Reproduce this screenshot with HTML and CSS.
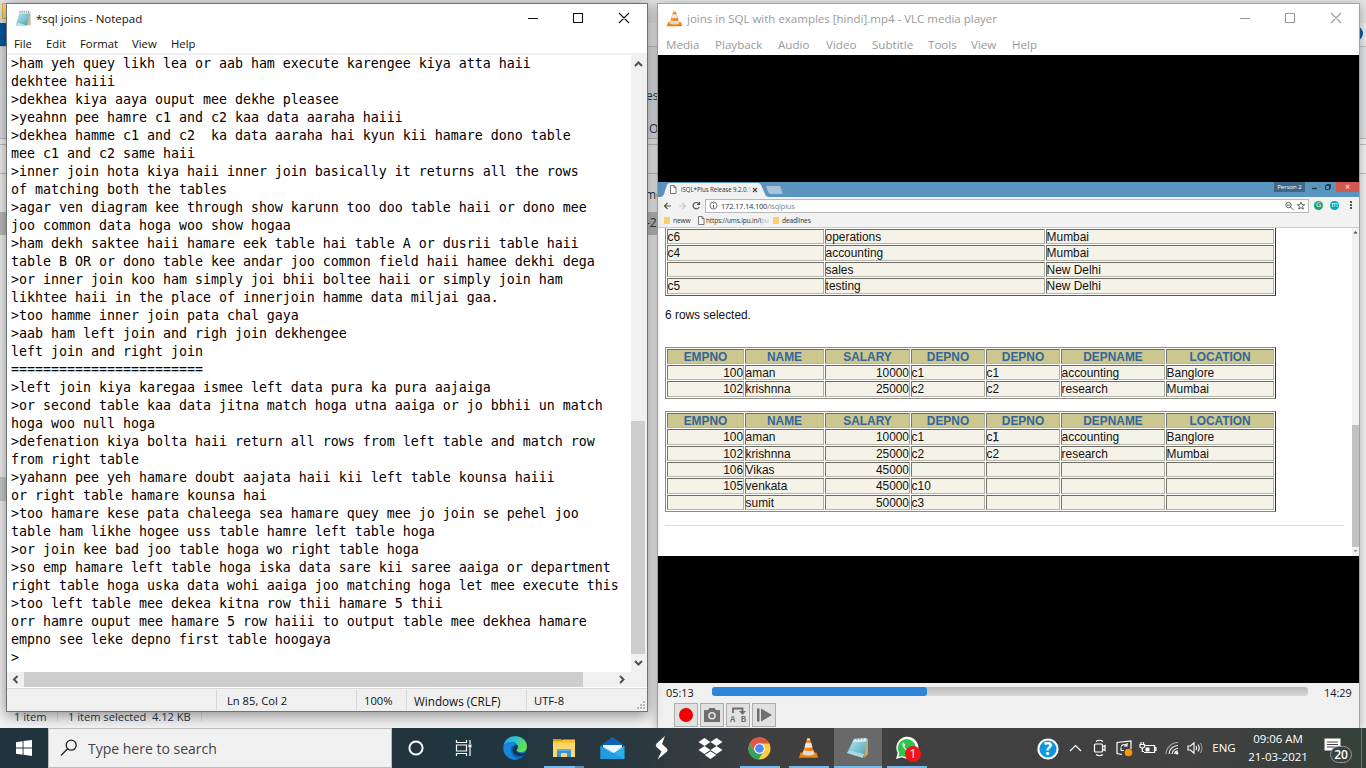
FILE: index.html
```html
<!DOCTYPE html>
<html lang="en">
<head>
<meta charset="utf-8">
<title>Desktop</title>
<link rel="stylesheet" href="styles.css">
</head>
<body>
<svg width="0" height="0" class="defs">
  <defs>
    <linearGradient id="pad" x1="0" y1="0" x2="1" y2="1"><stop offset="0" stop-color="#c3eef4"/><stop offset="1" stop-color="#3f9db5"/></linearGradient>
    <linearGradient id="edgeA" x1="0" y1="0" x2="1" y2="0.4"><stop offset="0" stop-color="#2aa8e8"/><stop offset=".5" stop-color="#2fc4c8"/><stop offset="1" stop-color="#62e04f"/></linearGradient>
    <linearGradient id="cone" x1="0" y1="0" x2="1" y2="0"><stop offset="0" stop-color="#ffa02a"/><stop offset="1" stop-color="#e86a00"/></linearGradient>
    <symbol id="i-pad" viewBox="0 0 24 24">
      <path d="M20 3h2v18l-5 1z" fill="#c9b98a"/><path d="M7 2h14l-4 20H1z" fill="url(#pad)"/><path d="M7 2h14l-.6 3H6z" fill="#e9f4f5"/><path d="M7 1v3M10 1v3M13 1v3M16 1v3M19 1v3" stroke="#6d7f84" stroke-width="1"/><path d="M5.500 9h13M4.500 12h13M4 15h13" stroke="#9ad5e0" stroke-width=".6"/><path d="M1 22l3-4 13 4z" fill="#b8e2ea"/>
    </symbol>
    <symbol id="i-bigpad" viewBox="0 0 24 24">
      <path d="M19 2l3 1v15l-4 4z" fill="#b9a878"/><path d="M8 3l13-1-4 20-16-5z" fill="url(#pad)"/><path d="M8 3l13-1-.8 3.500L6.500 6z" fill="#e4eff1"/><path d="M8 2v2.500M11 1.800v2.500M14 1.500V4M17 1.200v2.500M20 1v2.500" stroke="#7c8b90" stroke-width=".9"/><path d="M1 17l2.500-2.500L18 18l-1 4z" fill="#a9d6e0"/>
    </symbol>
    <symbol id="i-cone" viewBox="0 0 24 24">
      <path d="M3 17h18l2 6H1z" fill="#f58300"/><path d="M10.500 1h3L19 19q-7 3-14 0z" fill="url(#cone)"/><path d="M9 6h6l1.500 5q-4.500 1.500-9 0z" fill="#e9e9e9"/><path d="M6.400 14.500q5.600 2 11.200 0L19 19q-7 3-14 0z" fill="#dcdcdc"/><path d="M10.500 1h3l.5 2h-4z" fill="#e9e9e9"/>
    </symbol>
    <symbol id="i-page" viewBox="0 0 8 9"><path d="M1.500.5h3.500l2 2v6h-5.500zM5 .5v2h2" fill="#fff" stroke="#555" stroke-width=".8"/></symbol>
  </defs>
</svg>

<main class="desktop">
  <section class="explorer">
    <div class="ex-title"><span class="ex-folder"></span></div>
    <div class="ex-tabs"><span class="ex-file"></span><span class="ex-help"></span></div>
    <div class="ex-ribbon"><span class="ex-es">es</span><span class="ex-o">O</span></div>
    <div class="ex-address"></div>
    <div class="ex-body"><span class="ex-mo">mo</span><div class="ex-sel">-2</div><div class="ex-nav"></div></div>
    <div class="ex-status"><span class="ex-count">1 item</span><span class="ex-picked">1 item selected&nbsp; 4.12 KB</span></div>
  </section>

  <section class="window notepad">
    <header class="titlebar">
      <svg class="app-icon" width="17" height="17"><use href="#i-pad"/></svg>
      <h1 class="np-name">*sql joins - Notepad</h1>
      <svg class="controls" width="110" height="14" viewBox="0 0 110 14" fill="none" stroke="currentColor"><path d="M1 7.500h10M46.500 2.500h9v9h-9zM92 2l10 10M102 2L92 12" stroke-width="1.100"/></svg>
    </header>
    <nav class="np-menu"><span>File</span><span>Edit</span><span>Format</span><span>View</span><span>Help</span></nav>
    <div class="np-edit">
<pre class="np-text">&gt;ham yeh quey likh lea or aab ham execute karengee kiya atta haii
dekhtee haiii
&gt;dekhea kiya aaya ouput mee dekhe pleasee
&gt;yeahnn pee hamre c1 and c2 kaa data aaraha haiii
&gt;dekhea hamme c1 and c2  ka data aaraha hai kyun kii hamare dono table
mee c1 and c2 same haii
&gt;inner join hota kiya haii inner join basically it returns all the rows
of matching both the tables
&gt;agar ven diagram kee through show karunn too doo table haii or dono mee
joo common data hoga woo show hogaa
&gt;ham dekh saktee haii hamare eek table hai table A or dusrii table haii
table B OR or dono table kee andar joo common field haii hamee dekhi dega
&gt;or inner join koo ham simply joi bhii boltee haii or simply join ham
likhtee haii in the place of innerjoin hamme data miljai gaa.
&gt;too hamme inner join pata chal gaya
&gt;aab ham left join and righ join dekhengee
left join and right join
========================
&gt;left join kiya karegaa ismee left data pura ka pura aajaiga
&gt;or second table kaa data jitna match hoga utna aaiga or jo bbhii un match
hoga woo null hoga
&gt;defenation kiya bolta haii return all rows from left table and match row
from right table
&gt;yahann pee yeh hamare doubt aajata haii kii left table kounsa haiii
or right table hamare kounsa hai
&gt;too hamare kese pata chaleega sea hamare quey mee jo join se pehel joo
table ham likhe hogee uss table hamre left table hoga
&gt;or join kee bad joo table hoga wo right table hoga
&gt;so emp hamare left table hoga iska data sare kii saree aaiga or department
right table hoga uska data wohi aaiga joo matching hoga let mee execute this
&gt;too left table mee dekea kitna row thii hamare 5 thii
orr hamre ouput mee hamare 5 row haiii to output table mee dekhea hamare
empno see leke depno first table hoogaya
&gt;</pre>
      <div class="vscroll">
        <svg width="16" height="17" fill="none" stroke="#505050" stroke-width="2"><path d="M4 11l3.500-3.500L11 11"/></svg>
        <div class="vthumb"></div>
        <svg width="16" height="17" fill="none" stroke="#505050" stroke-width="2"><path d="M4 7l3.500 3.500L11 7"/></svg>
      </div>
    </div>
    <div class="hscroll">
      <svg width="17" height="15" fill="none" stroke="#505050" stroke-width="2"><path d="M10.500 4L7 7.500l3.500 3.500"/></svg>
      <div class="hthumb"></div>
      <svg class="hright" width="17" height="15" fill="none" stroke="#505050" stroke-width="2"><path d="M6 4l3.500 3.500L6 11"/></svg>
    </div>
    <footer class="np-status">
      <span class="st-pos">Ln 85, Col 2</span><span class="st-zoom">100%</span><span class="st-eol">Windows (CRLF)</span><span class="st-enc">UTF-8</span>
      <svg class="grip" width="9" height="9" fill="#b8b8b8"><path d="M6 0h2v2H6zM3 3h2v2H3zM6 3h2v2H6zM0 6h2v2H0zM3 6h2v2H3zM6 6h2v2H6z"/></svg>
    </footer>
  </section>

  <section class="window vlc">
    <header class="titlebar">
      <svg class="app-icon" width="17" height="17"><use href="#i-cone"/></svg>
      <h1 class="vlc-name">joins in SQL with examples [hindi].mp4 - VLC media player</h1>
      <svg class="controls" width="110" height="14" viewBox="0 0 110 14" fill="none" stroke="currentColor"><path d="M1 7.500h10M46.500 2.500h9v9h-9zM92 2l10 10M102 2L92 12" stroke-width="1.100"/></svg>
    </header>
    <nav class="vlc-menu"><span>Media</span><span>Playback</span><span>Audio</span><span>Video</span><span>Subtitle</span><span>Tools</span><span>View</span><span>Help</span></nav>
    <div class="video">
      <div class="browser">
        <div class="tabstrip">
          <svg class="tabshape" width="125" height="15"><path d="M2 15q3 0 4-3L9 3q1-2 3-2h88q2 0 3 2l4 9q1 3 4 3z" fill="#f2f2f2"/><path d="M108 4h13q1 0 1.500 1l2 6q0 1-1 1h-11q-1.500 0-2-1z" fill="#a9c3d8"/></svg>
          <div class="tabtext"><svg width="8" height="9"><use href="#i-page"/></svg><span>iSQL*Plus Release 9.2.0.<i>1</i></span><svg class="tabx" width="6" height="6" stroke="#444" stroke-width="1.100"><path d="M1 1l4 4M5 1L1 5"/></svg></div>
          <div class="wincontrols"><span class="person">Person 2</span><svg width="36" height="10" fill="none" stroke="#1d3950"><path d="M3 6.500h5" stroke-width="1.400"/><path d="M16.500 3.500h4v4h-4zM17.500 2.500h4v4"/></svg><span class="bclose">×</span></div>
        </div>
        <div class="toolbar">
          <svg class="navicons" width="47" height="16" fill="none" stroke="#555" stroke-width="1.200"><path d="M13 8H6.500M9.500 5l-3 3 3 3"/><path d="M21 8h6.500M24.500 5l3 3-3 3" stroke="#ccc"/><path d="M41 6a3.200 3.200 0 1 0 .2 3M41.500 4v2.500H39"/></svg>
          <div class="urlbox">
            <svg width="9" height="9" fill="none" stroke="#666"><circle cx="4.500" cy="4.500" r="3.500" stroke-width=".9"/><path d="M4.500 4v3M4.500 2v1"/></svg>
            <span class="url">172.17.14.100<i>/isqlplus</i></span>
            <svg class="urlend" width="24" height="10" fill="none" stroke="#555" stroke-width=".9"><circle cx="5.500" cy="4" r="2.700"/><path d="M7.500 6l3 3M4 4h3M18 1l1 2.600 2.700.1-2.100 1.700.8 2.700-2.400-1.500-2.400 1.500.8-2.700-2.100-1.700 2.700-.1z"/></svg>
          </div>
          <span class="ext ext-g">G</span><span class="ext ext-m">m</span>
          <svg class="dots" width="3" height="9" fill="#555"><path d="M0 0h2v2H0zM0 3h2v2H0zM0 6h2v2H0z"/></svg>
        </div>
        <div class="bookmarks"><i class="fold"></i><span class="bm-new">neww</span><svg width="8" height="9"><use href="#i-page"/></svg><span class="bm-ums">https://ums.lpu.in/l<i>pu</i></span><i class="fold"></i><span>deadlines</span></div>
        <div class="page">
          <div class="results">
            <div class="grid dept">
              <div>c6</div><div>operations</div><div>Mumbai</div>
              <div>c4</div><div>accounting</div><div>Mumbai</div>
              <div></div><div>sales</div><div>New Delhi</div>
              <div>c5</div><div>testing</div><div>New Delhi</div>
            </div>
            <p class="note">6 rows selected.</p>
            <div class="grid emp inner">
              <b>EMPNO</b><b>NAME</b><b>SALARY</b><b>DEPNO</b><b>DEPNO</b><b>DEPNAME</b><b>LOCATION</b>
              <div class="n">100</div><div>aman</div><div class="n">10000</div><div>c1</div><div>c1</div><div>accounting</div><div>Banglore</div>
              <div class="n">102</div><div>krishnna</div><div class="n">25000</div><div>c2</div><div>c2</div><div>research</div><div>Mumbai</div>
            </div>
            <div class="grid emp">
              <b>EMPNO</b><b>NAME</b><b>SALARY</b><b>DEPNO</b><b>DEPNO</b><b>DEPNAME</b><b>LOCATION</b>
              <div class="n">100</div><div>aman</div><div class="n">10000</div><div>c1</div><div class="pointed">c1<svg class="ibeam" width="5" height="10" fill="none" stroke="#444" stroke-width=".8"><path d="M.5.500q2 0 2 1t2-1M2.500 1.500v7M.5 9.500q2 0 2-1t2 1"/></svg></div><div>accounting</div><div>Banglore</div>
              <div class="n">102</div><div>krishnna</div><div class="n">25000</div><div>c2</div><div>c2</div><div>research</div><div>Mumbai</div>
              <div class="n">106</div><div>Vikas</div><div class="n">45000</div><div></div><div></div><div></div><div></div>
              <div class="n">105</div><div>venkata</div><div class="n">45000</div><div>c10</div><div></div><div></div><div></div>
              <div></div><div>sumit</div><div class="n">50000</div><div>c3</div><div></div><div></div><div></div>
            </div>
            <hr>
          </div>
          <div class="bscroll"><svg width="7" height="8"><path d="M1.500 5.500h4l-2-2.500z" fill="#444"/></svg><div class="bthumb"></div><svg width="7" height="8"><path d="M1.500 3h4l-2 2.500z" fill="#999"/></svg></div>
        </div>
      </div>
    </div>
    <div class="seek"><span>05:13</span><div class="track"><div class="played"></div></div><span class="total">14:29</span></div>
    <div class="buttons">
      <span><svg width="22" height="22"><circle cx="11" cy="11" r="7" fill="#f00000"/></svg></span>
      <span><svg width="22" height="22"><path d="M3 6h4l1.500-2h5L15 6h4v12H3z" fill="#6e6e6e"/><circle cx="11" cy="11.700" r="3.800" fill="#e1e1e1"/><circle cx="11" cy="11.700" r="2.200" fill="#6e6e6e"/></svg></span>
      <span><svg width="22" height="22" fill="none" stroke="#6e6e6e" stroke-width="1.800"><path d="M6 9V4.500h9.500V8"/><path d="M12 7h7l-3.500 4z" fill="#6e6e6e" stroke="none"/></svg><em>A&nbsp;B</em></span>
      <span><svg width="22" height="22"><path d="M4 4.500h2.500v13H4zM8 4.500l11 6.500-11 6.500z" fill="#6e6e6e"/></svg></span>
    </div>
  </section>
</main>

<footer class="taskbar">
  <div class="start"><svg width="16" height="16" fill="#fff"><path d="M0 2.200L6.600 1.300v6.200H0zM7.500 1.100L16 0v7.500H7.500zM0 8.400h6.600v6.300L0 13.800zM7.500 8.400H16V16l-8.500-1.200z"/></svg></div>
  <div class="search"><svg width="18" height="18" fill="none" stroke="#222" stroke-width="1.300"><circle cx="11.200" cy="6.200" r="5"/><path d="M7.600 9.800L1 16.500"/></svg><span>Type here to search</span></div>
  <div class="slot sys"><svg width="16" height="16"><circle cx="8" cy="8" r="6.600" fill="none" stroke="#fff" stroke-width="2"/></svg></div>
  <div class="slot sys"><svg width="18" height="16" fill="none" stroke="#fff" stroke-width="1.200"><path d="M1.500 0v2.500h10V0M1.500 5h10v6h-10zM1.500 16v-2.500h10V16M15 0v4M15 8v8"/><path d="M13.500 4.500h3v3h-3z" fill="#fff" stroke="none"/></svg></div>
  <div class="slot first"><svg width="24" height="24"><circle cx="12" cy="12" r="11.700" fill="#0b6cc4"/><path d="M.5 10C2 3 7 .3 12 .3c7 0 12 4.700 12 10 0 4-3.200 6-6 6-3 0-4.500-1.200-4.500-2 0-.6 1.200-1 1.200-3C14.700 8 12 6 8.500 6 5 6 1.500 8 .5 10z" fill="url(#edgeA)"/><path d="M.4 12C1 8 5 6 8.500 6c2.500 0 4.500 1 5.500 2.700-3-1-6.500 1.500-6.500 5.300 0 4.500 3.500 8 8 9C9 25.500.2 20.500.4 12z" fill="#1685dc"/><path d="M14.500 9c-2.500-.5-5 2-5 5 0 4 4 7 8.500 6 2-.4 3.600-1.500 4.600-2.800.3-.4 0-.8-.5-.5C18 18.500 13 16.500 13.500 13.800c.6-.7 1.200-1.300 1.200-2.600 0-.8 0-1.500-.2-2.200z" fill="#17344a"/></svg></div>
  <div class="slot open split"><svg width="22" height="20"><path d="M0 1h8l2 2H0z" fill="#e09a00"/><path d="M0 3h22v16H0z" fill="#ffd768"/><path d="M0 3h8l2-1.500h12V5H0z" fill="#f8c034"/><path d="M4 11h14v8h-4v-4H8v4H4z" fill="#3794dc"/><path d="M4 11h14v2H4z" fill="#55aeea"/></svg></div>
  <div class="slot"><svg width="25" height="24"><path d="M.5 9.500L12.500 1l12 8.500z" fill="#0a63b4"/><path d="M3 9h19v8H3z" fill="#eef4f8"/><path d="M.5 9.500L12.500 18l12-8.500V23H.5z" fill="#28b1ee"/><path d="M.5 9.500v13.500h24z" fill="#1d93dc" opacity=".7"/></svg></div>
  <div class="slot"><svg width="14" height="24"><path d="M10 0L1.500 7.500Q0 9.500 1.500 11l5 4.500L2.500 23.500l9-7.500q2-2 0-4L7 8z" fill="#fff"/></svg></div>
  <div class="slot"><svg width="25" height="22" fill="#fff"><path d="M6.500 1l6 4-6 4-6-4zM18.500 1l6 4-6 4-6-4zM6.500 9l6 4-6 4-6-4zM18.500 9l6 4-6 4-6-4zM12.500 14.300l5.800 3.800-5.800 3.800-5.800-3.800z"/></svg></div>
  <div class="slot open"><svg width="23" height="23"><circle cx="11.500" cy="11.500" r="11" fill="#ffcd40"/><path d="M11.500.5a11 11 0 0 0-9.800 6L7 15l4.500-8.500h10A11 11 0 0 0 11.500.5z" fill="#e0554a"/><path d="M1.700 6.500a11 11 0 0 0 9 16L15.500 14 7 15z" fill="#30a460"/><circle cx="11.500" cy="11.500" r="5.300" fill="#fff"/><circle cx="11.500" cy="11.500" r="4.300" fill="#4a8af4"/></svg></div>
  <div class="slot open"><svg width="21" height="24"><use href="#i-cone"/></svg></div>
  <div class="slot open active"><svg width="24" height="24"><use href="#i-bigpad"/></svg></div>
  <div class="slot open"><svg width="24" height="24"><path d="M1 23l1.700-6A11 11 0 1 1 7 21.300z" fill="#fff"/><path d="M3.300 20.800l1-3.700a9 9 0 1 1 3 2.800z" fill="#2cc64e"/><path d="M8.500 6.500c-2 1-1 4 1.500 6.700s5 4 6.500 2.300l-2-2.200-1.500 1c-2-1-3-2.200-3.700-4l1-1.300z" fill="#fff"/></svg><span class="badge">1</span></div>
  <div class="tray">
    <div class="t-help"><svg width="22" height="22"><circle cx="11" cy="11" r="9.600" fill="#0e96dc" stroke="#fff" stroke-width="2"/></svg><b>?</b></div>
    <div class="t-chev"><svg width="13" height="8" fill="none" stroke="#fff" stroke-width="1.200"><path d="M1 7l5.500-5.500L12 7"/></svg></div>
    <div class="t-cam"><svg width="14" height="18" fill="none" stroke="#fff" stroke-width="1.200"><path d="M3 2.500q3.500-2.500 7 0M3 15.500q3.500 2.500 7 0M2.500 5h6q1 0 1 1v6q0 1-1 1h-6q-1 0-1-1V6q0-1 1-1zM9.500 8l2.500-1.500v5L9.500 10"/></svg></div>
    <div class="t-upd"><svg width="18" height="18" fill="none" stroke="#fff" stroke-width="1.200"><path d="M7 15.500l-5-1V3.500L16 2v8M6 7.500q2-3 5.500-1.500M12 4v3H9M6 8.500v3M6 11.500h3"/><circle cx="13.500" cy="13.500" r="3.800" fill="#ff9500" stroke="none"/></svg></div>
    <div class="t-bat"><svg width="18" height="14" fill="none" stroke="#fff" stroke-width="1.200"><path d="M6 4.500h9.500v7H5M15.500 6.500H17v3h-1.500"/><path d="M6.500 6.500h4v4h-4z" fill="#fff" stroke="none"/><path d="M2 1v2M4.500 1v2M1 3.500h4.500V6L4 7H2.500L1 6zM3.300 7v3.500H5"/></svg></div>
    <div class="t-wifi"><svg width="14" height="14" fill="none" stroke="#fff" stroke-width="1.100"><path d="M1 13A12 12 0 0 1 13 1.500" stroke="#aaa"/><path d="M4 13a9 9 0 0 1 9-8.500M7 13a6 6 0 0 1 6-5.500M9.500 13a3.500 3.500 0 0 1 3.500-3"/><circle cx="12" cy="12.300" r="1.300" fill="#fff" stroke="none"/></svg></div>
    <div class="t-vol"><svg width="17" height="14" fill="none" stroke="#fff" stroke-width="1.100"><path d="M1 5h2.500L7 1.800v10.400L3.500 9H1zM9 5q1.300 2 0 4M11 3.500q2.500 3.500 0 7"/><path d="M13.300 2q3.500 5 0 10" stroke="#999"/></svg></div>
    <div class="t-lang">ENG</div>
    <div class="t-clock"><span>09:06 AM</span><span class="date">21-03-2021</span></div>
    <div class="t-note"><svg width="17" height="17"><path d="M.5.500h16v12h-4v3l-3-3h-9z" fill="#fff"/><path d="M3 4h11M3 6.500h11M3 9h8" stroke="#444"/></svg><span class="num">20</span></div>
  </div>
</footer>
</body>
</html>
```
FILE: styles.css
```css
* { box-sizing: border-box; }
body { margin: 0; width: 1366px; height: 768px; overflow: hidden; font-family: "Open Sans", "Noto Sans", sans-serif; font-size: 12px; color: #111; display: flex; flex-direction: column; }
h1, p, pre { margin: 0; font-weight: normal; }
svg { display: block; flex: none; }
.defs { position: absolute; }
.desktop { position: relative; height: 728px; flex: none; overflow: hidden; }

/* file explorer behind the two windows */
.explorer { height: 728px; display: flex; flex-direction: column; background: #f3f3f3; color: #26374f; white-space: nowrap; }
.ex-title { height: 23px; background: #e4e4e4; padding: 3px 0 0 2px; }
.ex-folder { display: block; width: 15px; height: 16px; background: #f7dc85; border: 1px solid #dfb63c; }
.ex-tabs { height: 24px; display: flex; justify-content: space-between; border-bottom: 1px solid #c4c4c4; background: #ececec; }
.ex-file { width: 60px; background: #005a9e; }
.ex-help { width: 15px; height: 15px; margin: 3px 3px 0 0; border-radius: 50%; background: #0f5ca5; }
.ex-ribbon { height: 92px; padding: 40px 0 0 646px; background: #e2e3e5; border-bottom: 1px solid #bdbdbd; }
.ex-ribbon span { display: block; line-height: 17px; height: 33px; }
.ex-o { padding-left: 3px; }
.ex-address { height: 30px; margin-top: 5px; border: solid #c0c0c0; border-width: 1px 0; }
.ex-body { flex: 1; padding-top: 12px; }
.ex-mo { display: block; height: 26px; line-height: 17px; padding-left: 645px; }
.ex-sel { width: 700px; height: 23px; margin-top: 0; padding-left: 646px; line-height: 22px; background: #bdbdbd; }
.ex-nav { width: 200px; height: 24px; margin-top: 242px; background: #ccc; }
.ex-status { height: 22px; display: flex; padding: 4px 0 0 14px; font-size: 11.100px; line-height: 14px; }
.ex-count { width: 44px; border-right: 1px solid #dcdcdc; height: 12px; }
.ex-picked { width: 144px; padding-left: 10px; border-right: 1px solid #dcdcdc; height: 12px; }

.window { position: absolute; top: 3px; display: flex; flex-direction: column; background: #fff; }
.titlebar { display: flex; align-items: center; height: 31px; flex: none; padding-bottom: 3px; }
.app-icon { margin-left: 8px; }
.controls { margin-left: auto; }

/* notepad */
.notepad { left: 6px; width: 642px; height: 709px; border: 1px solid #6f7372; z-index: 2; box-shadow: 0 3px 14px rgba(0,0,0,.45); }
.np-name { font-size: 11.500px; margin-left: 4px; }
.notepad .controls { margin-right: 10px; }
.np-menu { height: 20px; flex: none; display: flex; align-items: center; padding: 0 0 1px 7px; font-size: 11.300px; border-bottom: 2px solid #f0f0f0; }
.np-menu span:nth-child(1) { width: 32px; } .np-menu span:nth-child(2) { width: 34px; } .np-menu span:nth-child(3) { width: 52px; } .np-menu span:nth-child(4) { width: 39px; }
.np-edit { height: 617px; flex: none; display: flex; }
.np-text { width: 624px; padding-left: 4px; overflow: hidden; font: 13.290px/18px "DejaVu Sans Mono", monospace; color: #000; height: 617px; }
.vscroll { flex: 1; display: flex; flex-direction: column; background: #f0f0f0; }
.vthumb { margin: 349px 0 0; height: 233px; width: 14px; background: #cdcdcd; }
.hscroll { height: 15px; flex: none; display: flex; background: #f0f0f0; }
.hthumb { width: 559px; background: #cdcdcd; }
.hright { margin-left: 31px; }
.np-status { flex: 1; display: flex; align-items: center; background: #f0f0f0; border-top: 1px solid #d7d7d7; margin-top: 1px; font-size: 11.200px; position: relative; }
.np-status span { height: 20px; line-height: 22px; border-left: 1px solid #d7d7d7; }
.st-pos { margin-left: 209px; width: 140px; padding-left: 10px; }
.st-zoom { width: 50px; padding-left: 7px; }
.np-status .st-eol { width: 120px; padding-left: 7px; font-size: 11.700px; }
.st-enc { padding-left: 7px; }
.grip { position: absolute; right: 1px; bottom: 1px; }

/* media player */
.vlc { left: 657px; width: 703px; height: 725px; border: 1px solid #a3a3a3; border-bottom: 0; background: #f0f0f0; color: #999; box-shadow: 0 2px 10px rgba(0,0,0,.3); z-index: 1; }
.vlc .titlebar, .vlc-menu { background: #fff; }
.vlc-name { font-size: 11.500px; margin-left: 4px; }
.vlc .controls { margin-right: 10px; }
.vlc-menu { height: 20px; flex: none; display: flex; align-items: center; padding: 0 0 2px 8px; font-size: 11.600px; }
.vlc-menu span:nth-child(1) { width: 49px; } .vlc-menu span:nth-child(2) { width: 63px; } .vlc-menu span:nth-child(3) { width: 48px; } .vlc-menu span:nth-child(4) { width: 46px; } .vlc-menu span:nth-child(5) { width: 56px; } .vlc-menu span:nth-child(6) { width: 43px; } .vlc-menu span:nth-child(7) { width: 41px; }
.video { height: 628px; flex: none; background: #000; padding-top: 127px; }
.browser { height: 374px; background: #f2f2f2; display: flex; flex-direction: column; color: #333; font-size: 7px; }
.tabstrip { height: 15px; background: #5a95bf; display: flex; position: relative; flex: none; justify-content: space-between; }
.tabshape { position: absolute; left: 0; top: 0; }
.tabtext { position: relative; display: flex; align-items: center; padding-left: 11px; white-space: nowrap; font-size: 6.200px; letter-spacing: -.1px; }
.tabtext span { margin-left: 4px; width: 71px; }
.tabtext i, .bm-ums i { font-style: normal; color: #bbb; }
.wincontrols { display: flex; height: 10px; line-height: 10px; }
.person { width: 31px; background: #3f6888; color: #fff; text-align: center; font-size: 6px; }
.wincontrols svg { margin-left: 4px; margin-right: -9px; }
.bclose { width: 23px; background: #d2574c; color: #fff; text-align: center; font-size: 9px; }
.toolbar { height: 17px; flex: none; display: flex; align-items: center; }
.urlbox { width: 604px; height: 14px; border: 1px solid #b8b8b8; background: #fff; display: flex; align-items: center; padding-left: 3px; }
.url { margin-left: 3px; font-size: 7.600px; letter-spacing: -.25px; }
.url i { color: #888; font-style: normal; }
.urlend { margin-left: auto; margin-right: 1px; }
.ext { width: 9px; height: 9px; border-radius: 50%; color: #fff; font-size: 7px; line-height: 8px; text-align: center; }
.ext-g { background: #15a36f; margin-left: 5px; } .ext-m { background: #00a7b5; margin-left: 7px; }
.dots { margin-left: 11px; }
.bookmarks { height: 14px; flex: none; display: flex; align-items: center; padding-left: 6px; border-bottom: 1px solid #ccc; font-size: 6.700px; letter-spacing: -.15px; white-space: nowrap; }
.fold { width: 6px; height: 7px; background: #f9d06b; margin-right: 3px; }
.bm-new { width: 24px; } .bm-ums { width: 67px; margin-left: 1px; font-size: 6.500px; }
.page { height: 328px; display: flex; background: #fff; color: #111; font: 11.900px/15px "Liberation Sans", Arial, sans-serif; }
.results { width: 694px; padding: 0 8px 0 7px; }
.grid { display: grid; width: 611px; gap: 1px; padding: 1px; border: 1px solid #8c8c85; border-right-color: #333; background: #fff; grid-auto-rows: 15.400px; }
.grid > div, .grid > b { border: 1px solid #bcbcb2; border-color: #6c6c65 #aeaea5 #b6b6ad #77776f; background: #f5f3e8; line-height: 14px; }
.grid > div { text-indent: -.4px; }
.grid > b { background: #ccc78f; color: #33669a; text-align: center; }
.grid > .n { text-align: right; text-indent: 0; }
.dept { grid-template-columns: 157px 220px 228px; border-top: 0; padding-top: 1px; border-bottom-color: #555; }
.emp { grid-template-columns: 77px 79px 85px 74px 74px 104px 108px; }
.emp > * { min-width: 0; }
.note { margin: 12px 0 24px; }
.inner { margin-bottom: 12px; }
.pointed { position: relative; }
.ibeam { position: absolute; left: 6px; top: 2px; }
hr { margin: 13px 0 0; border: 0; border-top: 1px solid #dcdcda; }
.bscroll { width: 7px; background: #f1f1f1; }
.bthumb { margin: 189px 0 0; height: 122px; background: #c1c1c1; }
.seek { height: 18px; display: flex; align-items: center; color: #111; font-size: 10.900px; padding: 0 0 0 8px; }
.seek > span { width: 46px; }
.track { width: 596px; height: 9px; border-radius: 3px; background: linear-gradient(#b9b9b9, #dadada); margin: -1px 16px 0 0; }
.seek .total { width: 30px; }
.played { width: 215px; height: 9px; border-radius: 3px; background: #2c84d8; }
.buttons { display: flex; gap: 2px; padding: 2px 0 0 16px; }
.buttons span { position: relative; width: 24px; height: 24px; border: 1px solid #adadad; background: #e1e1e1; }
.buttons em { position: absolute; left: 3px; top: 12px; font: bold 9px/9px "Liberation Mono", monospace; color: #6e6e6e; }

/* taskbar */
.taskbar { height: 40px; display: flex; color: #fff; background: linear-gradient(90deg, #20343d 0, #20363f 460px, #2b3840 640px, #3f3f3f 760px, #414141 1180px, #35403a 1366px); }
.start { width: 48px; display: flex; align-items: center; justify-content: center; }
.search { width: 344px; background: #f1f1f1; border: 1px solid #bcbcbc; color: #444; display: flex; align-items: center; padding-left: 11px; font-size: 14px; }
.search span { margin-left: 10px; }
.slot { width: 49px; position: relative; display: flex; align-items: center; justify-content: center; }
.slot.sys { width: 48px; }
.slot.first { margin-left: 2px; }
.open::after { content: ""; position: absolute; left: 5px; right: 4px; bottom: 0; height: 2px; background: #76b9ed; }
.split::after { background: linear-gradient(90deg, #76b9ed 31px, #5c8db8 31px); }
.active { background: #696969; margin-left: 1px; width: 48px; }
.active::after { left: 0; right: 0; }
.badge { position: absolute; left: 23px; top: 18px; width: 16px; height: 16px; border-radius: 50%; background: #f51414; font-size: 12px; line-height: 16px; text-align: center; }
.tray { margin-left: auto; display: flex; width: 330px; font-size: 11.500px; }
.tray > div { display: flex; align-items: center; justify-content: center; flex: none; }
.t-help { width: 24px; position: relative; padding-top: 2px; }
.t-help b { position: absolute; font-size: 17px; line-height: 22px; }
.t-chev { width: 30px; } .t-cam { width: 20px; } .t-upd { width: 27px; } .t-bat { width: 22px; } .t-wifi { width: 26px; } .t-vol { width: 20px; } .t-lang { width: 38px; padding-bottom: 1px; }
.t-clock { width: 70px; flex-direction: column; line-height: 18px; padding-bottom: 1px; letter-spacing: -.05px; }
.t-clock span { white-space: nowrap; }
.t-note { width: 49px; position: relative; padding: 0 9px 3px 0; border-right: 1px solid #777; }
.num { position: absolute; left: 17px; top: 18px; width: 22px; height: 17px; border: 1px solid #999; border-radius: 9px; background: #3a423f; font-size: 12px; font-weight: 600; line-height: 15px; text-align: center; }
```
